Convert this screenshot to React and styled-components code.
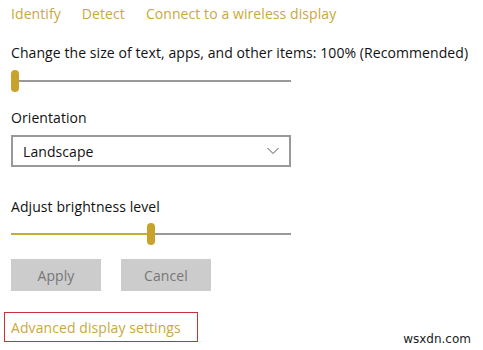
import styled, { createGlobalStyle } from "styled-components";

const GlobalStyle = createGlobalStyle`
  body {
    margin: 0;
    background: #fff;
    font-family: "Open Sans", "Noto Sans", sans-serif;
  }
`;

const gold = "#c9a83e";

const Page = styled.div`
  position: relative;
  width: 483px;
  height: 350px;
  padding: 4px 0 0 11px;
  box-sizing: border-box;
  font-size: 14px;
  letter-spacing: 0.08px;
  color: #111;
  overflow: hidden;
`;

const Links = styled.div`
  display: flex;
  gap: 21px;
  height: 20px;
  line-height: 20px;
`;

const Link = styled.span`
  color: ${gold};
`;

const Label = styled.div`
  height: 20px;
  line-height: 20px;
  margin-top: ${(p) => p.$top}px;
`;

const Slider = styled.div`
  position: relative;
  width: 280px;
  height: 22px;
  margin-top: ${(p) => p.$top}px;
  display: flex;
  align-items: center;
`;

const Track = styled.div`
  width: 100%;
  height: 2px;
  background: linear-gradient(
    to right,
    ${gold} ${(p) => p.$fill}px,
    #999 ${(p) => p.$fill}px
  );
`;

const Thumb = styled.div`
  position: absolute;
  top: 0;
  width: 8px;
  height: 22px;
  border-radius: 4px;
  background: #c9a22c;
`;

const Select = styled.div`
  width: 280px;
  height: 32px;
  margin-top: 7px;
  box-sizing: border-box;
  border: 2px solid #999;
  display: flex;
  align-items: center;
  justify-content: space-between;
  padding: 0 10px 0 10px;
`;

const Buttons = styled.div`
  display: flex;
  gap: 20px;
  margin-top: 14px;
`;

const Button = styled.div`
  width: 90px;
  height: 32px;
  background: #ccc;
  color: #777;
  display: flex;
  align-items: center;
  justify-content: center;
`;

const Advanced = styled.div`
  width: 194px;
  height: 30px;
  margin: 21px 0 0 -7px;
  box-sizing: border-box;
  border: 1px solid #c8303a;
  padding-left: 6px;
  display: flex;
  align-items: center;
  color: ${gold};
`;

const Watermark = styled.div`
  position: absolute;
  right: 12px;
  bottom: 4px;
  font-family: "DejaVu Sans", sans-serif;
  font-size: 12px;
  letter-spacing: 0;
  color: #222;
`;

export default function App() {
  return (
    <>
      <GlobalStyle />
      <Page>
        <Links>
          <Link>Identify</Link>
          <Link>Detect</Link>
          <Link>Connect to a wireless display</Link>
        </Links>
        <Label $top={19}>
          Change the size of text, apps, and other items: 100% (Recommended)
        </Label>
        <Slider $top={7}>
          <Track $fill={0} />
          <Thumb style={{ left: 0 }} />
        </Slider>
        <Label $top={16}>Orientation</Label>
        <Select>
          <span>Landscape</span>
          <svg width="12" height="8" viewBox="0 0 12 8">
            <path d="M0.5 1 L6 6.5 L11.5 1" fill="none" stroke="#555" strokeWidth="1" />
          </svg>
        </Select>
        <Label $top={30}>Adjust brightness level</Label>
        <Slider $top={6}>
          <Track $fill={140} />
          <Thumb style={{ left: 136 }} />
        </Slider>
        <Buttons>
          <Button>Apply</Button>
          <Button>Cancel</Button>
        </Buttons>
        <Advanced>Advanced display settings</Advanced>
        <Watermark>wsxdn.com</Watermark>
      </Page>
    </>
  );
}
